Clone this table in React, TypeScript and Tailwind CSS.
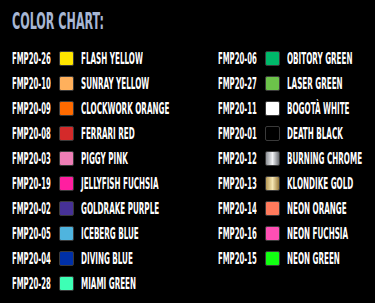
const left = [
  { code: "FMP20-26", name: "FLASH YELLOW", swatch: "bg-[#ffe600]" },
  { code: "FMP20-10", name: "SUNRAY YELLOW", swatch: "bg-[#ffb05c]" },
  { code: "FMP20-09", name: "CLOCKWORK ORANGE", swatch: "bg-[#ff6a00]" },
  { code: "FMP20-08", name: "FERRARI RED", swatch: "bg-[#d42a2a]" },
  { code: "FMP20-03", name: "PIGGY PINK", swatch: "bg-[#ee7eb6]" },
  { code: "FMP20-19", name: "JELLYFISH FUCHSIA", swatch: "bg-[#ff1fa0]" },
  { code: "FMP20-02", name: "GOLDRAKE PURPLE", swatch: "bg-[#463196]" },
  { code: "FMP20-05", name: "ICEBERG BLUE", swatch: "bg-[#4fb4de]" },
  { code: "FMP20-04", name: "DIVING BLUE", swatch: "bg-[#0030a8]" },
  { code: "FMP20-28", name: "MIAMI GREEN", swatch: "bg-[#3dffb5]" },
];

const right = [
  { code: "FMP20-06", name: "OBITORY GREEN", swatch: "bg-[#00b86a]" },
  { code: "FMP20-27", name: "LASER GREEN", swatch: "bg-[#6cc24a]" },
  { code: "FMP20-11", name: "BOGOTÀ WHITE", swatch: "bg-white" },
  { code: "FMP20-01", name: "DEATH BLACK", swatch: "bg-black" },
  {
    code: "FMP20-12",
    name: "BURNING CHROME",
    swatch: "bg-gradient-to-r from-[#8d9196] via-[#f2f3f5] to-[#6d7075]",
  },
  {
    code: "FMP20-13",
    name: "KLONDIKE GOLD",
    swatch: "bg-gradient-to-r from-[#b89a55] via-[#f6e7b4] to-[#9a7b3a]",
  },
  { code: "FMP20-14", name: "NEON ORANGE", swatch: "bg-[#ff7a5c]" },
  { code: "FMP20-16", name: "NEON FUCHSIA", swatch: "bg-[#ff4fb4]" },
  { code: "FMP20-15", name: "NEON GREEN", swatch: "bg-[#12ff12]" },
];

type Color = { code: string; name: string; swatch: string };

function Row({ color }: { color: Color }) {
  return (
    <div className="flex h-[25px] items-center">
      <span className="w-[47px] whitespace-nowrap">
        <span className="inline-block origin-left scale-x-[0.48] text-[16px] font-bold leading-none text-white">
          {color.code}
        </span>
      </span>
      <span
        className={`h-[15px] w-[15px] shrink-0 rounded-[2px] border border-[#3a3a3a] ${color.swatch}`}
      />
      <span className="ml-[7px] whitespace-nowrap">
        <span className="inline-block origin-left scale-x-[0.5] text-[16px] font-bold leading-none text-white">
          {color.name}
        </span>
      </span>
    </div>
  );
}

export default function App() {
  return (
    <div className="h-[303px] w-[375px] overflow-hidden bg-black px-3 pt-[8px] font-['Liberation_Sans_Narrow','DejaVu_Sans_Condensed','Liberation_Sans',sans-serif]">
      <h2 className="whitespace-nowrap">
        <span className="inline-block origin-left scale-x-[0.54] text-[23px] font-bold leading-[26px] text-[#a7b6d3]">
          COLOR CHART:
        </span>
      </h2>

      <div className="mt-[10px] grid grid-cols-[206px_1fr]">
        <div>
          {left.map((c) => (
            <Row key={c.code} color={c} />
          ))}
        </div>
        <div>
          {right.map((c) => (
            <Row key={c.code} color={c} />
          ))}
        </div>
      </div>
    </div>
  );
}
